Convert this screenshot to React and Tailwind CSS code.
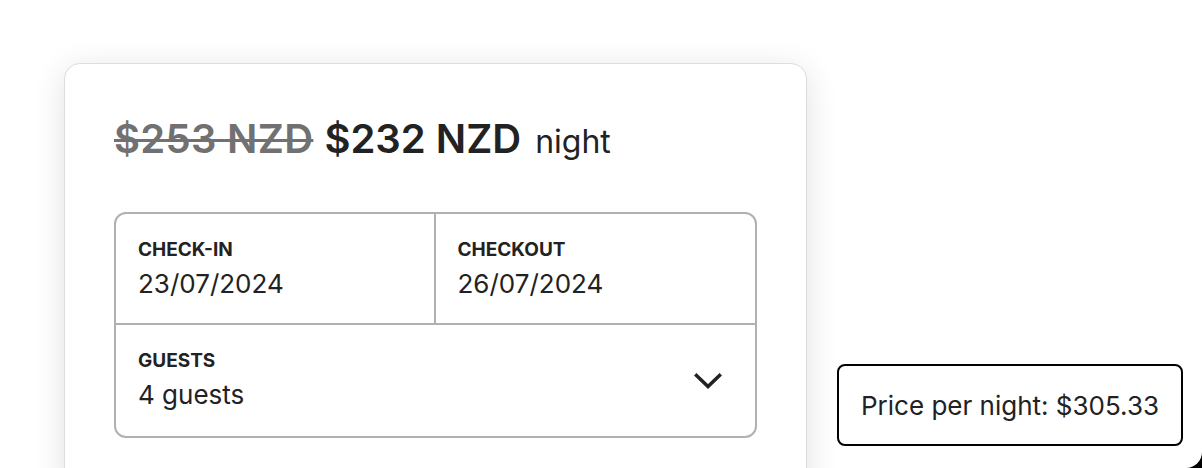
import React from 'react'

function Chevron() {
  return (
    <svg width="28" height="18" viewBox="0 0 28 18" fill="none">
      <path d="M2.5 3.5 L14 14.5 L25.5 3.5" stroke="#222222" strokeWidth="3.5" strokeLinecap="square" strokeLinejoin="miter" />
    </svg>
  )
}

function Field({ label, value }) {
  return (
    <div className="flex flex-col pl-[22px] pt-[24px]">
      <span className="text-[19px] leading-[24px] font-bold text-[#222222]">{label}</span>
      <span className="text-[26px] leading-[34px] text-[#222222] mt-[5px]">{value}</span>
    </div>
  )
}

export default function App() {
  return (
    <div className="w-[1202px] h-[468px] bg-black" style={{ fontFamily: 'Inter, "Noto Sans", sans-serif' }}>
      <div className="w-full h-full bg-white rounded-br-[16px] overflow-hidden flex items-start">
        {/* booking card */}
        <div className="ml-[64px] mt-[63px] w-[743px] shrink-0 bg-white border border-[#dddddd] rounded-[16px] shadow-[0_6px_32px_rgba(0,0,0,0.12)] px-[49px] pt-[50px] pb-[60px]">
          <div className="flex items-baseline text-[#222222]">
            <span className="text-[40px] leading-[50px] font-semibold text-[#717171] line-through decoration-[3px] tracking-[0.3px]">$253 NZD</span>
            <span className="ml-[11px] text-[40px] leading-[50px] font-semibold">$232 NZD</span>
            <span className="ml-[14px] text-[32px] leading-[50px] font-normal">night</span>
          </div>

          <div className="mt-[45px] border-2 border-[#b0b0b0] rounded-[12px] overflow-hidden">
            <div className="grid grid-cols-2 h-[111px] border-b-2 border-[#b0b0b0]">
              <div className="border-r-2 border-[#b0b0b0]">
                <Field label="CHECK-IN" value="23/07/2024" />
              </div>
              <Field label="CHECKOUT" value="26/07/2024" />
            </div>
            <div className="flex items-start justify-between h-[111px]">
              <Field label="GUESTS" value="4 guests" />
              <div className="mr-[33px] mt-[47px]">
                <Chevron />
              </div>
            </div>
          </div>
        </div>

        {/* tooltip */}
        <div className="self-end ml-[30px] mb-[22px] w-[346px] h-[82px] border-2 border-black rounded-[8px] bg-white flex items-center justify-center">
          <span className="text-[26px] text-[#222222]">Price per night: $305.33</span>
        </div>
      </div>
    </div>
  )
}
